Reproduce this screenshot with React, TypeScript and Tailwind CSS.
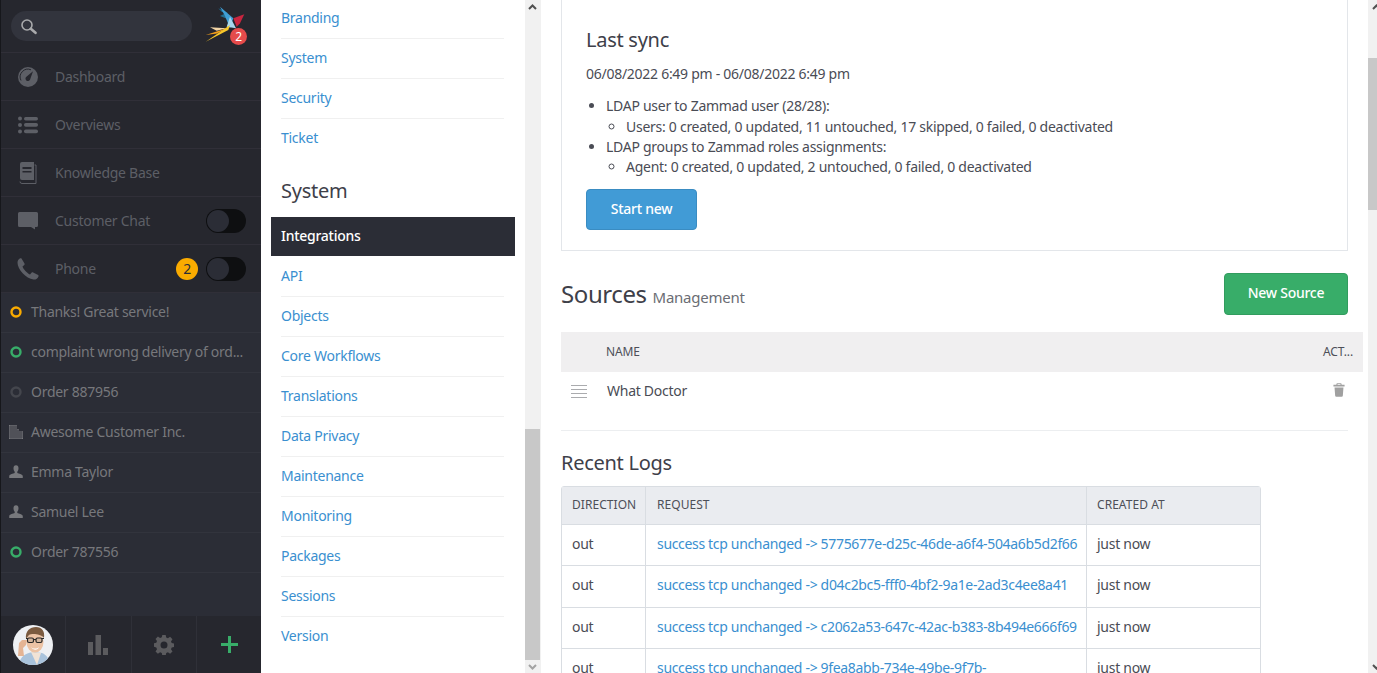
import React from "react";

function Row({ icon, label, right }: { icon: React.ReactNode; label: string; right?: React.ReactNode }) {
  return (
    <div className="h-[48px] flex items-center border-b border-[#302f38] shrink-0">
      <div className="w-[54px] flex justify-center shrink-0">{icon}</div>
      <span className="text-[14px] text-[#5d5f66]">{label}</span>
      {right && <div className="ml-auto flex items-center gap-[8px] pr-[15px]">{right}</div>}
    </div>
  );
}

function Toggle() {
  return (
    <div className="w-[40px] h-[24px] rounded-full bg-[#0e0f11] flex items-center p-[1px]">
      <div className="w-[22px] h-[22px] rounded-full bg-[#2b2d36]" />
    </div>
  );
}

function Ring({ color }: { color: string }) {
  return (
    <svg width="14" height="14" viewBox="0 0 14 14">
      <circle cx="7" cy="7" r="4.5" fill="none" stroke={color} strokeWidth="2.4" />
    </svg>
  );
}

const Person = () => (
  <svg width="14" height="13" viewBox="0 0 15 14" fill="#77787c">
    <path d="M4.800 3.500a2.700 3.300 0 0 1 5.400 0c0 1.600-.5 3-1.300 3.800v1.300c1.700.8 5.400 1.300 5.900 3.200V14H.2v-2.200c.5-1.900 4.200-2.400 5.900-3.200V7.300C5.300 6.500 4.800 5.100 4.800 3.500z" />
  </svg>
);

const Building = () => (
  <svg width="14" height="14" viewBox="0 0 14 14" fill="#77787c">
    <path d="M0 0h8v4h2v2h4v8H0z" />
    <path stroke="#2b2d36" strokeWidth="0.6" d="M2 0v14M4 0v14M6 0v14M8 0v14M10 4v10M12 6v8M0 2h8M0 4h8M0 6h14M0 8h14M0 10h14M0 12h14" />
  </svg>
);

function Sub({ icon, label }: { icon: React.ReactNode; label: string }) {
  return (
    <div className="h-[40px] flex items-center border-b border-[#32343d] shrink-0 pb-[2px]">
      <div className="w-[30px] pl-[8px] shrink-0 flex">{icon}</div>
      <span className="text-[14px] text-[#77787c] whitespace-nowrap">{label}</span>
    </div>
  );
}

function Logo() {
  return (
    <svg width="42" height="38" viewBox="0 0 42 38">
      <path d="M14.300 3.300L24.300 8.300 18 7z" fill="#1d6f99" />
      <path d="M16 11L26 15 20 9z" fill="#246f92" />
      <path d="M16 1.700L29.300 13.300 26 23.300 21 11z" fill="#3f9fd6" />
      <path d="M26 11.700L32 23.300 22.700 21.700z" fill="#a8d8ee" />
      <path d="M29.300 13.300L40.300 9.300 36 18.300 32.700 21.700z" fill="#c8253f" />
      <path d="M6 22.300L22.700 23.300 12.700 25.700z" fill="#f3d5a5" />
      <path d="M1.700 30L22.700 23.300 13 28.500z" fill="#f59f1a" />
      <path d="M1.700 36.700L26 20 24.300 25z" fill="#f7c72a" />
    </svg>
  );
}

function Sidebar() {
  return (
    <aside className="w-[261px] h-[673px] shrink-0 flex flex-col bg-[#2b2d36] border-l border-[#16171b]">
      <div className="bg-[#26272e]">
        <div className="h-[53px] flex items-center border-b border-[#302f38] relative">
          <div className="ml-[10px] w-[181px] h-[30px] rounded-full bg-[#32343d] flex items-center pl-[9px]">
            <svg width="17" height="17" viewBox="0 0 17 17" fill="none" stroke="#a9aaac" strokeWidth="1.6">
              <circle cx="7" cy="7" r="5" />
              <path d="M10.800 10.800l4.700 4" strokeWidth="2.600" strokeLinecap="round" />
            </svg>
          </div>
          <div className="absolute left-[203px] top-[5px]"><Logo /></div>
          <div className="absolute left-[229px] top-[28px] w-[17px] h-[17px] rounded-full bg-[#e54b4b] text-white text-[12px] flex items-center justify-center">2</div>
        </div>
        <Row label="Dashboard" icon={
          <svg width="20" height="20" viewBox="0 0 20 20">
            <circle cx="10" cy="10" r="10" fill="#5d5f66" />
            <path d="M3 13.500A7.800 7.800 0 0 1 13 2.800" fill="none" stroke="#26272e" strokeWidth="1" />
            <path d="M15 4.200l-3 8.500a2.400 2.400 0 1 1-3.600-3z" fill="#26272e" />
          </svg>
        } />
        <Row label="Overviews" icon={
          <svg width="20" height="18" viewBox="0 0 20 18" fill="#5d5f66"><circle cx="2" cy="2.500" r="2" /><circle cx="2" cy="9" r="2" /><circle cx="2" cy="15.500" r="2" /><rect x="6" y="1" width="14" height="3.500" rx="1.700" /><rect x="6" y="7" width="14" height="3.800" rx="1.800" /><rect x="6" y="13.500" width="14" height="3.700" rx="1.800" /></svg>
        } />
        <Row label="Knowledge Base" icon={
          <svg width="18" height="22" viewBox="0 0 18 22"><path d="M1 2a2 2 0 0 1 2-2h12v18H3a2 2 0 0 1-2-2z" fill="#5d5f66" /><path d="M15.500 3h1.500v18.500H3a2 2 0 0 1-2-2" fill="none" stroke="#5d5f66" /><path d="M3.500 5h9v2h-9zM3.500 9h9v1.500h-9z" fill="#26272e" /></svg>
        } />
        <Row label="Customer Chat" right={<Toggle />} icon={
          <svg width="20" height="18" viewBox="0 0 20 18" fill="#5d5f66"><path d="M1.500 0h17A1.500 1.500 0 0 1 20 1.500v12a1.500 1.500 0 0 1-1.500 1.500H17v2.500L13 15H1.500A1.500 1.500 0 0 1 0 13.500v-12A1.500 1.500 0 0 1 1.500 0z" /></svg>
        } />
        <Row label="Phone" right={<><div className="w-[22px] h-[22px] rounded-full bg-[#faab00] text-[#2b2d36] text-[14px] flex items-center justify-center">2</div><Toggle /></>} icon={
          <svg width="22" height="22" viewBox="0 0 22 22" fill="#5d5f66"><path d="M4.500 0.500l3 5c.3.500.2 1-.2 1.400L5.500 8.500c.8 2.500 4.500 6.800 7.500 8l1.700-1.900c.4-.4.900-.5 1.400-.2l5 2.700c.5.300.6.800.4 1.300-.8 2-2.500 3.300-5 3.100C9 21 0.500 11 0.500 4.800c0-2 1-3.600 2.700-4.500.5-.3 1-.2 1.300.2z" /></svg>
        } />
      </div>
      <Sub icon={<Ring color="#faab00" />} label="Thanks! Great service!" />
      <Sub icon={<Ring color="#38ad69" />} label="complaint wrong delivery of ord..." />
      <Sub icon={<Ring color="#44464d" />} label="Order 887956" />
      <Sub icon={<Building />} label="Awesome Customer Inc." />
      <Sub icon={<Person />} label="Emma Taylor" />
      <Sub icon={<Person />} label="Samuel Lee" />
      <Sub icon={<Ring color="#38ad69" />} label="Order 787556" />
      <div className="mt-auto h-[57px] flex bg-[#26272e]">
        <div className="w-[65px] border-r border-[#2f3038] flex items-center justify-center">
          <svg width="40" height="40" viewBox="0 0 40 40">
            <defs><clipPath id="av"><circle cx="20" cy="20" r="20" /></clipPath></defs>
            <g clipPath="url(#av)">
              <rect width="40" height="40" fill="#eef0f3" />
              <path d="M6 40c1-9 7-12 14-13l9 1c5 2 7 6 8 12z" fill="#a9c3dc" />
              <path d="M18 27l6 13 4-12z" fill="#f1e3d6" />
              <ellipse cx="22" cy="17" rx="8.500" ry="10.500" fill="#ecc3a5" />
              <path d="M13 14c-1-8 4-12 10-12s9 4 8 11c-3-4-12-5-15-3z" fill="#7a5a3f" />
              <path d="M13 13.500h2M29 13.500h2M20 14.500h3" stroke="#262626" strokeWidth="1.200" />
              <rect x="14.500" y="13" width="6" height="4.500" rx="1.500" fill="#d2b49c" stroke="#262626" strokeWidth="1.200" />
              <rect x="23" y="13" width="6" height="4.500" rx="1.500" fill="#d2b49c" stroke="#262626" strokeWidth="1.200" />
              <path d="M18 22c2 2 6 2 8 0-1 3.500-6 3.500-8 0z" fill="#fff" />
              <path d="M5 31l1-13 3-3 5 0-1 5-3 3 1 8z" fill="#e4b494" />
            </g>
          </svg>
        </div>
        <div className="w-[66px] border-r border-[#2f3038] flex items-center justify-center pr-[1px]">
          <svg width="20" height="20" viewBox="0 0 20 20" fill="#5b5b5e"><rect x="0" y="7" width="5" height="13" /><rect x="7.500" y="0" width="5.500" height="20" /><rect x="15" y="13" width="5" height="7" /></svg>
        </div>
        <div className="w-[65px] border-r border-[#2f3038] flex items-center justify-center">
          <svg width="20" height="20" viewBox="0 0 20 20" fill="#5b5b5e"><path fillRule="evenodd" d="M8.300 0h3.400l.5 2.600 1.700.7 2.200-1.500 2.400 2.400-1.500 2.200.7 1.700 2.300.5v3.400l-2.300.5-.7 1.700 1.500 2.200-2.400 2.400-2.200-1.500-1.700.7-.5 2.600H8.300l-.5-2.600-1.700-.7-2.200 1.500-2.400-2.400 1.500-2.200-.7-1.700L0 11.700V8.300l2.300-.5.7-1.700-1.500-2.200 2.400-2.400 2.200 1.500 1.700-.7zM10 6.500a3.500 3.500 0 1 0 0 7 3.500 3.500 0 0 0 0-7z" /></svg>
        </div>
        <div className="flex-1 flex items-center justify-center">
          <svg width="17" height="17" viewBox="0 0 17 17" fill="#38ad69"><rect x="7" y="0" width="3" height="17" /><rect x="0" y="7" width="17" height="3" /></svg>
        </div>
      </div>
    </aside>
  );
}

function NavRow({ label, last }: { label: string; last?: boolean }) {
  return (
    <div className={`h-[40px] flex items-center border-b pb-[2px] ${last ? "border-transparent" : "border-[#f0f0f0]"} text-[14px] text-[#3a8fd0] ml-[20px] w-[223px]`}>
      <a>{label}</a>
    </div>
  );
}

function Nav() {
  return (
    <nav className="w-[264px] shrink-0 h-[673px] bg-white overflow-hidden">
      <div className="h-[39px] flex items-center border-b border-[#f0f0f0] text-[14px] text-[#3a8fd0] ml-[20px] w-[223px] pb-[3px]">Branding</div>
      <NavRow label="System" />
      <NavRow label="Security" />
      <NavRow label="Ticket" last />
      <div className="h-[58px] pt-[20px] pl-[20px] text-[20px] leading-[24px] text-[#3e4049]">System</div>
      <div className="h-[40px]">
        <div className="ml-[10px] w-[244px] h-[39px] bg-[#2b2d36] text-white text-[14px] font-medium flex items-center pl-[10px] pb-[3px]">Integrations</div>
      </div>
      {["API", "Objects", "Core Workflows", "Translations", "Data Privacy", "Maintenance", "Monitoring", "Packages", "Sessions"].map((l) => (
        <NavRow key={l} label={l} />
      ))}
      <NavRow label="Version" last />
    </nav>
  );
}

const ArrowUp = ({ color }: { color: string }) => (
  <svg width="9" height="6" viewBox="0 0 9 6" fill="none" stroke={color} strokeWidth="2"><path d="M1 5l3.500-3.500L8 5" /></svg>
);
const ArrowDown = ({ color }: { color: string }) => (
  <svg width="9" height="6" viewBox="0 0 9 6" fill="none" stroke={color} strokeWidth="2"><path d="M1 1l3.500 3.500L8 1" /></svg>
);

function VBar() {
  return (
    <div className="w-[16px] shrink-0 h-[673px] bg-[#f1f1f1] flex flex-col border-r border-[#f1f1f1]">
      <div className="h-[14px] flex justify-center items-center"><ArrowUp color="#505050" /></div>
      <div className="mt-[415px] h-[231px] bg-[#c8c8c8]" />
      <div className="mt-auto h-[13px] flex justify-center items-center"><ArrowDown color="#a3a3a3" /></div>
    </div>
  );
}

function RightBar() {
  return (
    <div className="w-[9px] h-[673px] shrink-0 overflow-hidden bg-[#f1f1f1]">
      <div className="w-[16px] h-[673px] flex flex-col">
        <div className="h-[14px] flex justify-center items-center"><ArrowUp color="#505050" /></div>
        <div className="mt-[44px] h-[152px] bg-[#c8c8c8]" />
        <div className="mt-auto h-[13px] flex justify-center items-center"><ArrowDown color="#505050" /></div>
      </div>
    </div>
  );
}

const logs = [
  "success tcp unchanged -> 5775677e-d25c-46de-a6f4-504a6b5d2f66",
  "success tcp unchanged -> d04c2bc5-fff0-4bf2-9a1e-2ad3c4ee8a41",
  "success tcp unchanged -> c2062a53-647c-42ac-b383-8b494e666f69",
  "success tcp unchanged -> 9fea8abb-734e-49be-9f7b-",
];

function Main() {
  return (
    <main className="flex-1 h-[673px] overflow-hidden bg-white pl-[20px] text-[#4a4c55] text-[14px]">
      <div className="w-[787px]">
        <section className="h-[251px] border border-t-0 border-[#e3e6ea] pl-[24px] pt-[28px]">
          <h2 className="text-[20px] leading-[24px] text-[#3e4049]">Last sync</h2>
          <p className="mt-[12px] leading-[20px]">06/08/2022 6:49 pm - 06/08/2022 6:49 pm</p>
          <ul className="mt-[12px] pl-[20px] list-disc leading-[20px]">
            <li>LDAP user to Zammad user (28/28):
              <ul className="pl-[20px] pt-[1px] list-[circle]"><li>Users: 0 created, 0 updated, 11 untouched, 17 skipped, 0 failed, 0 deactivated</li></ul>
            </li>
            <li>LDAP groups to Zammad roles assignments:
              <ul className="pl-[20px] list-[circle]"><li>Agent: 0 created, 0 updated, 2 untouched, 0 failed, 0 deactivated</li></ul>
            </li>
          </ul>
          <button className="mt-[12px] w-[111px] h-[41px] rounded-[4px] bg-[#419bd6] border border-[#3a8cc2] text-white text-[14px] font-medium pb-[2px]">Start new</button>
        </section>
        <div className="h-[81px] flex items-center pt-[5px]">
          <h1 className="text-[24px] leading-[28px] tracking-[-0.4px] text-[#3e4049] pt-[2px]">Sources <span className="text-[15px] tracking-[-0.25px] text-[#6b6d74]">Management</span></h1>
          <button className="ml-auto w-[124px] h-[42px] rounded-[4px] bg-[#38ad69] border border-[#329c5e] text-white text-[14px] font-medium pb-[3px]">New Source</button>
        </div>
        <div className="w-[802px] h-[40px] bg-[#f0eff0] flex items-center text-[12px] tracking-[-0.1px] text-[#4d4f58]">
          <span className="pl-[45px]">NAME</span>
          <span className="ml-auto pr-[10px]">ACT...</span>
        </div>
        <div className="h-[59px] border-b border-[#eceef0] flex items-start">
          <div className="w-[46px] pl-[10px] pt-[13px]">
            <svg width="16" height="14" viewBox="0 0 16 14" stroke="#aaabae" strokeWidth="1"><path d="M0 .5h16M0 4.500h16M0 8.500h16M0 12.500h16" /></svg>
          </div>
          <span className="pt-[9px] leading-[20px]">What Doctor</span>
          <svg className="ml-auto mr-[3px] mt-[11px]" width="12" height="14" viewBox="0 0 14 16" fill="#a0a0a0"><path d="M5 0h4a1 1 0 0 1 1 1v1h3.500v2H.500V2H4V1a1 1 0 0 1 1-1zm.300 1v1h3.400V1zM1.800 5h10.400l-.7 9.500a1.500 1.500 0 0 1-1.500 1.500H4a1.500 1.500 0 0 1-1.500-1.500z" /></svg>
        </div>
        <h2 className="mt-[20px] text-[20px] leading-[24px] text-[#3e4049]">Recent Logs</h2>
        <div className="mt-[11px] w-[700px] border border-[#d9dde2] rounded-t-[3px]">
          <div className="flex h-[38px] bg-[#eaecf0] text-[12px] tracking-[0.05px] text-[#4d4f58] items-center border-b border-[#d9dde2]">
            <div className="w-[84px] h-full flex items-center pl-[10px] pb-[2px] border-r border-[#d9dde2]">DIRECTION</div>
            <div className="w-[441px] h-full flex items-center pl-[11px] pb-[2px] border-r border-[#d9dde2]">REQUEST</div>
            <div className="pl-[10px] pb-[2px]">CREATED AT</div>
          </div>
          {logs.map((l, i) => (
            <div key={l} className={`flex ${i === 1 ? "h-[42px]" : "h-[41px]"} items-center border-b border-[#d9dde2]`}>
              <div className="w-[84px] h-full flex items-center pl-[10px] pb-[4px] border-r border-[#d9dde2]">out</div>
              <div className="w-[441px] h-full flex items-center pl-[11px] pb-[4px] border-r border-[#d9dde2] text-[#3a8fd0] whitespace-nowrap tracking-[-0.33px]">{l}</div>
              <div className="pl-[10px] pb-[4px]">just now</div>
            </div>
          ))}
        </div>
      </div>
    </main>
  );
}

export default function App() {
  return (
    <div className="w-[1377px] h-[673px] flex overflow-hidden font-['Noto_Sans',sans-serif] tracking-[-0.27px] bg-white">
      <Sidebar />
      <Nav />
      <VBar />
      <Main />
      <RightBar />
    </div>
  );
}
